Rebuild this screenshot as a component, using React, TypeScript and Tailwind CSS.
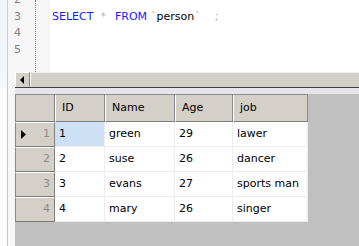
import React from "react";

const font = { fontFamily: '"DejaVu Sans", Verdana, sans-serif' };

const cols = [
  { key: "id", label: "ID", w: "w-[50px]" },
  { key: "name", label: "Name", w: "w-[70px]" },
  { key: "age", label: "Age", w: "w-[58px]" },
  { key: "job", label: "job", w: "w-[75px]" },
];

const rows = [
  { id: "1", name: "green", age: "29", job: "lawer" },
  { id: "2", name: "suse", age: "26", job: "dancer" },
  { id: "3", name: "evans", age: "27", job: "sports man" },
  { id: "4", name: "mary", age: "26", job: "singer" },
];

const Editor = () => {
  return (
    <div className="flex h-[72px] overflow-hidden">
      <div className="w-[7px] bg-[#f2f6fb]" />
      <div className="w-px bg-[#f2c98e]" />
      <div className="flex w-[42px] bg-[#f6f6f6]">
        <div className="w-[27px] -mt-[8px] pl-[6px] text-[11px] text-[#808080]">
          {["2", "3", "4", "5"].map((n) => (
            <div key={n} className="h-[16.5px] leading-[16.5px]">
              {n}
            </div>
          ))}
        </div>
        <div className="w-px border-l border-dotted border-[#7a7a7a]" />
      </div>
      <div className="flex-1 bg-white pl-[2px] -mt-[8px] text-[11px]">
        <div className="h-[16.5px]" />
        <div className="h-[16.5px] leading-[16.5px] whitespace-pre">
          <span className="text-[#1a1aff]">SELECT</span>
          <span className="inline-block ml-[7px] text-[#b8b8b8]">*</span>
          <span className="inline-block ml-[9px] text-[#1a1aff]">FROM</span>
          <span className="inline-block ml-[4px] text-[#a8a8a8]">`</span>
          <span className="text-black">person</span>
          <span className="inline-block ml-[1px] text-[#a8a8a8]">`</span>
          <span className="inline-block ml-[14px] text-[#b0b0b0]">;</span>
        </div>
      </div>
    </div>
  );
};

const ScrollBar = () => {
  return (
    <div className="flex h-[16px]">
      <div className="w-[7px] bg-[#f6f9fc]" />
      <div className="w-px bg-[#b4cbe6]" />
      <div className="w-[7px] bg-[#f7f7f7]" />
      <div className="flex-1 flex border-b border-[#404040] bg-[#d4d0c8]">
        <div className="w-[15px] flex items-center justify-center border-t border-l border-white border-r border-r-[#808080]">
          <svg width="5" height="8" viewBox="0 0 5 8">
            <path d="M4 0 L0 4 L4 8 Z" fill="#000" />
          </svg>
        </div>
        <div className="flex-1 border-t border-[#f0eee8] border-l border-l-[#ffffff]" />
      </div>
    </div>
  );
};

const Grid = () => {
  return (
    <div className="flex flex-1">
      <div className="w-[7px] bg-[#fbfcfe]" />
      <div className="w-px bg-[#b4cbe6]" />
      <div className="w-[7px] bg-[#f7f7f7]" />
      <div className="flex-1 flex flex-col bg-[#c0c0c0]">
        <div className="h-[6px] bg-[#e6e6ea]" />
        <div className="flex flex-col w-[293px] text-[11px] text-black">
          <div className="flex h-[28px] bg-[#d4d0c8] border-t border-l border-[#8a8a8a]">
            <div className="w-[39px] border-r border-[#808080] border-b" />
            {cols.map((c) => (
              <div
                key={c.key}
                className={`${c.w} flex items-center pl-[6px] border-l border-l-white border-r border-r-[#8a8a8a] border-b border-b-[#808080]`}
              >
                {c.label}
              </div>
            ))}
          </div>
          {rows.map((r, i) => (
            <div key={r.id} className="flex h-[25px]">
              <div className="w-[40px] flex items-center justify-between pl-[5px] pr-[4px] bg-[#d4d0c8] border-l border-[#8a8a8a] border-t border-t-white border-b border-b-[#7a7a7a] border-r border-r-[#808080]">
                <span className="w-[6px]">
                  {i === 0 && (
                    <svg width="5" height="9" viewBox="0 0 5 9">
                      <path d="M0 0 L5 4.5 L0 9 Z" fill="#000" />
                    </svg>
                  )}
                </span>
                <span className="text-[#8a8a8a]">{i + 1}</span>
              </div>
              {cols.map((c) => (
                <div
                  key={c.key}
                  className={`${c.w} flex items-center pl-[4px] border-r border-b border-[#ececec] ${
                    i === 0 && c.key === "id" ? "bg-[#cde0f5]" : "bg-white"
                  }`}
                >
                  {r[c.key as keyof typeof r]}
                </div>
              ))}
            </div>
          ))}
        </div>
      </div>
    </div>
  );
};

export default function App() {
  return (
    <div className="w-[359px] h-[246px] flex flex-col overflow-hidden bg-white" style={font}>
      <Editor />
      <ScrollBar />
      <Grid />
    </div>
  );
}
